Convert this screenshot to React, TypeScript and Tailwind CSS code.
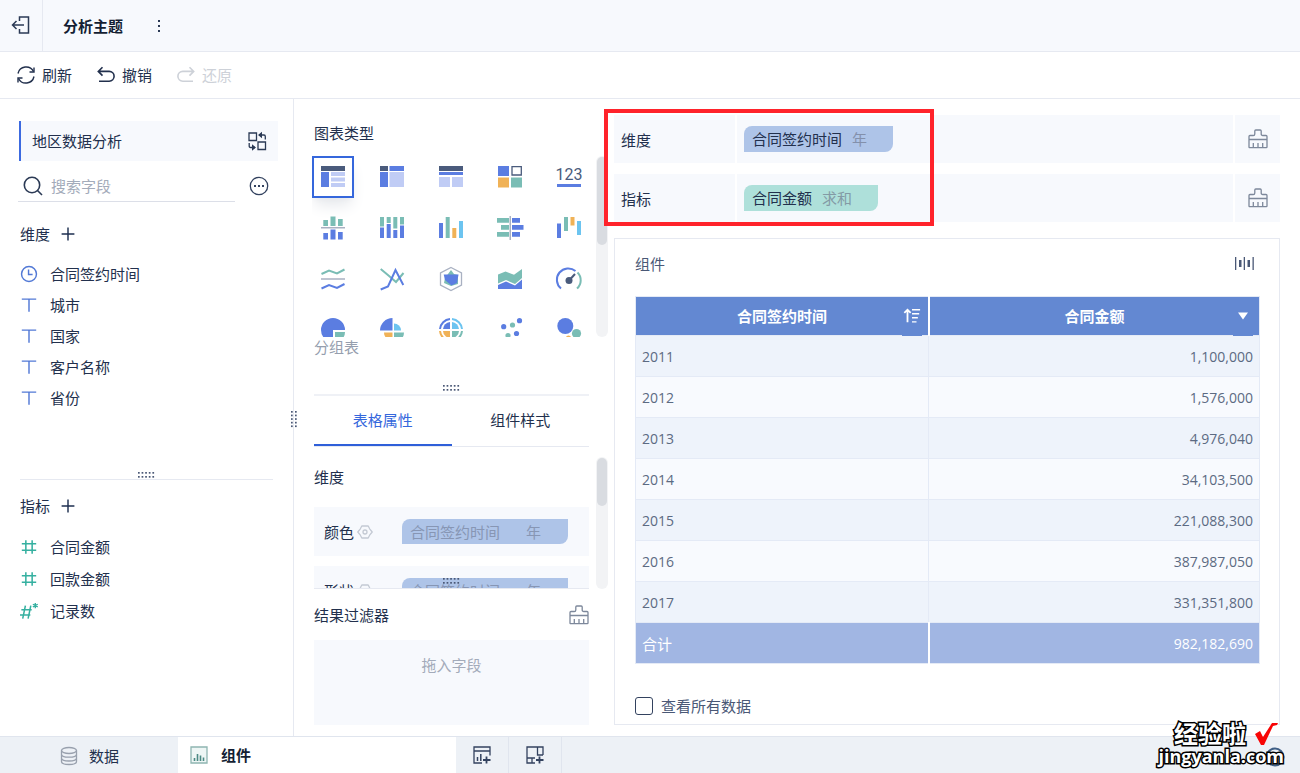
import { ReactNode, useState } from 'react'

const BLUE = '#5b7de1'
const LIGHT = '#c0ccf5'
const DARK = '#4a5b7c'
const GREEN = '#7abdb5'
const ORANGE = '#f0b257'
const CYAN = '#6cc4f0'
const GREY = '#a9b1c2'

interface IconProps {
  size?: number
  className?: string
  children: ReactNode
}

// Line icons all share a 20x20 grid
function Icon({ size = 20, className = '', children }: IconProps) {
  return (
    <svg
      width={size}
      height={size}
      viewBox="0 0 20 20"
      fill="none"
      stroke="currentColor"
      strokeWidth="1.3"
      className={`shrink-0 ${className}`}
      aria-hidden="true"
    >
      {children}
    </svg>
  )
}

function BrushIcon() {
  return (
    <Icon className="text-[#7d889b]">
      <path d="M1 18V7.500q0-1 1-1h3.200q1.600 0 1.600-1.600V2q0-1 1-1h4.400q1 0 1 1v2.900q0 1.600 1.600 1.600H18q1 0 1 1V18q0 .7-.7.7H1.700Q1 18.700 1 18z" />
      <path d="M1 10.500h18M5.300 14v4.700M10 14v4.700M14.700 14v4.700" />
    </Icon>
  )
}

function GearIcon() {
  return (
    <Icon size={16} className="text-[#c3c9d3]">
      <path d="M6 2.500h8l1.800 3.500L19 10l-3.200 4-1.800 3.500H6L4.200 14 1 10l3.200-4z" strokeLinejoin="round" strokeWidth="1.600" />
      <circle cx="10" cy="10" r="2.500" strokeWidth="1.600" />
    </Icon>
  )
}

function PlusIcon() {
  return (
    <Icon size={16} className="text-[#1e2f50]">
      <path d="M10 2v16M2 10h16" strokeWidth="1.800" />
    </Icon>
  )
}

function ClockIcon() {
  return (
    <Icon size={18} className="text-[#5279d6]">
      <circle cx="10" cy="10" r="8.300" strokeWidth="1.600" />
      <path d="M9.500 5v5.500h4.500" strokeWidth="1.600" />
    </Icon>
  )
}

function TextIcon() {
  return (
    <Icon size={18} className="text-[#5279d6]">
      <path d="M2 3.500h16M10 3.500v14" strokeWidth="1.600" />
    </Icon>
  )
}

function HashIcon() {
  return (
    <Icon size={18} className="text-[#35b0a0]">
      <path d="M6.500 2.500v15M13.500 2.500v15M2 6.500h16M2 13.500h16" strokeWidth="1.700" />
    </Icon>
  )
}

function HashStarIcon() {
  return (
    <Icon size={18} className="overflow-visible text-[#35b0a0]">
      <path d="M6 4l-3 14.500M12 4l-3 14.500M1.500 8.500h11.500M0 14.500h11.500" strokeWidth="1.700" />
      <path d="M17 1v6M14.300 2.500l5.400 3M19.700 2.500l-5.400 3" strokeWidth="1.500" />
    </Icon>
  )
}

const chartTypes: { name: string; art: ReactNode }[] = [
  {
    name: '分组表',
    art: (
      <>
        <path fill={DARK} d="M0 1h24v5H0z" />
        <path fill={BLUE} d="M0 7h8v15H0z" />
        <path fill={LIGHT} d="M10 7h14v4H10zM10 12.500h14v4H10zM10 18h14v4H10z" />
      </>
    ),
  },
  {
    name: '交叉表',
    art: (
      <>
        <path fill={DARK} d="M0 1h8v5H0z" />
        <path fill={BLUE} d="M9.500 1h14.500v5H9.500zM0 7h8v15H0z" />
        <path fill={LIGHT} d="M9.500 7h14.500v15H9.500z" />
      </>
    ),
  },
  {
    name: '明细表',
    art: (
      <>
        <path fill={DARK} d="M0 1h24v5H0z" />
        <path fill={BLUE} d="M0 7h24v3H0z" />
        <path fill={LIGHT} d="M0 12h11v10H0zM13 12h11v10H13z" />
      </>
    ),
  },
  {
    name: '颜色表格',
    art: (
      <>
        <path fill={BLUE} d="M0 1h11v10H0z" />
        <path fill="none" stroke={DARK} strokeWidth="1.300" d="M14 1.700h9.300v8.300H14z" />
        <path fill={ORANGE} d="M0 12.500h11v10H0z" />
        <path fill={GREEN} d="M13 12.500h11v10H13z" />
      </>
    ),
  },
  {
    name: '指标卡',
    art: (
      <>
        <text x="12" y="15" textAnchor="middle" fontSize="16" fontFamily="Roboto, sans-serif" fill={DARK}>
          123
        </text>
        <path fill={BLUE} d="M0 19h24v3H0z" />
      </>
    ),
  },
  {
    name: '对比柱状图',
    art: (
      <>
        <path fill={GREEN} d="M2.300 4h4.700v6H2.300zM9.500 0.500h5v9.500h-5zM17 3h4.700v7H17z" />
        <path fill={GREY} d="M0 11h24v1.500H0z" />
        <path fill={BLUE} d="M2.300 17h4.700v6.500H2.300zM9.500 13.500h5v10h-5zM17 16h4.700v7.500H17z" />
      </>
    ),
  },
  {
    name: '百分比柱状图',
    art: (
      <>
        <path fill={GREEN} d="M0 1h4v9.500H0zM6.700 1h4v6h-4zM13.300 1h4v11.500h-4zM20 1h4v7.500h-4z" />
        <path fill={BLUE} d="M0 11.500h4V22H0zM6.700 8h4v14h-4zM13.300 14h4v8h-4zM20 9.500h4V22h-4z" />
      </>
    ),
  },
  {
    name: '多系列柱状图',
    art: (
      <>
        <path fill={BLUE} d="M0 7h4v15H0z" />
        <path fill={GREEN} d="M6.700 1h4v21h-4z" />
        <path fill={ORANGE} d="M13.300 12h4v10h-4z" />
        <path fill={CYAN} d="M20 5h4v17h-4z" />
      </>
    ),
  },
  {
    name: '对比条形图',
    art: (
      <>
        <path fill={GREEN} d="M-1 2h12v4.700H-1zM3 9h8v4.700H3zM-1 16h12v4.700H-1z" />
        <path fill={GREY} d="M11.500 0H13v24h-1.500z" />
        <path fill={BLUE} d="M14 2h8v4.700h-8zM14 9h11.500v4.700H14zM14 16h8v4.700h-8z" />
      </>
    ),
  },
  {
    name: '瀑布图',
    art: (
      <>
        <path fill={BLUE} d="M0 7.500h4V22H0z" />
        <path fill={GREEN} d="M7 1h4v14H7z" />
        <path fill={ORANGE} d="M13.500 1h4v8.500h-4z" />
        <path fill={CYAN} d="M20 5h4v14h-4z" />
      </>
    ),
  },
  {
    name: '折线图',
    art: (
      <g fill="none" strokeWidth="2">
        <path stroke={GREEN} d="M.5 7 8 3.500l8 3L23.500 2.500" />
        <path stroke={GREY} d="M0 12h24" strokeWidth="1.500" />
        <path stroke={BLUE} d="M.5 21.500 8 18l8 3 7.500-4" />
      </g>
    ),
  },
  {
    name: '范围面积图',
    art: (
      <g fill="none" strokeWidth="2">
        <path stroke={GREEN} d="M.7 2 8.500 8.500 16 15l7.500-9" />
        <path stroke={BLUE} d="M.7 22.500 8 19.500 15.500 3l7.800 15" />
      </g>
    ),
  },
  {
    name: '雷达图',
    art: (
      <>
        <path fill="none" stroke={GREY} strokeWidth="1.300" d="M12 .5 22.500 6v12L12 23.500 1.500 18V6z" />
        <path fill={GREEN} d="M12 3l3 4 4 1v9l-7 2-7-3 1-5z" />
        <path fill={BLUE} d="M4.700 7.500h14.800L18 16l-5.500 2.500L6 13z" />
      </>
    ),
  },
  {
    name: '面积图',
    art: (
      <>
        <path fill={GREEN} d="M0 7.500l7.500-3L16 7.700 24 2v9l-7 6-9-4-8 3.500z" />
        <path fill={BLUE} d="M0 18l8-3.500 9 4 7-6V22H0z" />
      </>
    ),
  },
  {
    name: '仪表盘',
    art: (
      <>
        <path fill="none" stroke={BLUE} strokeWidth="2" d="M4 21.500A11 11 0 0 1 18.500 4" />
        <path fill="none" stroke={GREEN} strokeWidth="2" d="M20.500 5.500a11 11 0 0 1-.5 16" />
        <circle cx="12" cy="13.500" r="3.500" fill={DARK} />
        <path stroke={DARK} strokeWidth="2" d="M12 13.500 18 7" />
      </>
    ),
  },
  {
    name: '饼图',
    art: (
      <>
        <path fill={BLUE} d="M12 12h12A12 12 0 1 0 12 24z" />
        <path fill={GREEN} d="M14 14h10a10 10 0 0 1-10 10z" />
      </>
    ),
  },
  {
    name: '玫瑰图',
    art: (
      <>
        <path fill={BLUE} d="M12.500 12.500V0A12.500 12.500 0 0 0 0 12.500z" />
        <path fill={CYAN} d="M14 12.500h7A7 7 0 0 0 14 5.500z" />
        <path fill={ORANGE} d="M12.500 14.500v8a8 8 0 0 1-8.500-8z" />
        <path fill={GREEN} d="M14 14.500v10a10 10 0 0 0 10-10z" />
      </>
    ),
  },
  {
    name: '多层饼图',
    art: (
      <>
        <g fill="none" strokeWidth="2">
          <path stroke={BLUE} d="M11 1A11 11 0 0 0 1 11" />
          <path stroke={CYAN} d="M13 1a11 11 0 0 1 10 10" />
          <path stroke={GREEN} d="M23 13a11 11 0 0 1-10 10" />
          <path stroke={ORANGE} d="M1 13a11 11 0 0 0 10 10" />
        </g>
        <path fill={BLUE} d="M11 11V4a7.500 7.500 0 0 0-7 7z" />
        <path fill={CYAN} d="M13 11V4a7.500 7.500 0 0 1 7 7z" />
        <path fill={ORANGE} d="M11 13v7a7.500 7.500 0 0 1-7-7z" />
        <path fill={GREEN} d="M13 13v7a7.500 7.500 0 0 0 7-7z" />
      </>
    ),
  },
  {
    name: '散点图',
    art: (
      <>
        <g fill={BLUE}>
          <circle cx="5.700" cy="8.700" r="2.600" />
          <circle cx="21.500" cy="2.700" r="2.600" />
          <circle cx="18.500" cy="15.500" r="2.600" />
        </g>
        <g fill={GREEN}>
          <circle cx="14.500" cy="7" r="2.600" />
          <circle cx="10" cy="17.500" r="2.600" />
        </g>
      </>
    ),
  },
  {
    name: '聚合气泡图',
    art: (
      <>
        <circle cx="8.300" cy="8" r="8" fill={BLUE} />
        <circle cx="19.500" cy="15.500" r="4.600" fill={GREEN} />
        <circle cx="11.500" cy="20" r="2.600" fill={ORANGE} />
      </>
    ),
  },
]

const dimensions = [
  { name: '合同签约时间', icon: <ClockIcon /> },
  { name: '城市', icon: <TextIcon /> },
  { name: '国家', icon: <TextIcon /> },
  { name: '客户名称', icon: <TextIcon /> },
  { name: '省份', icon: <TextIcon /> },
]

const measures = [
  { name: '合同金额', icon: <HashIcon /> },
  { name: '回款金额', icon: <HashIcon /> },
  { name: '记录数', icon: <HashStarIcon /> },
]

const rows = [
  ['2011', '1,100,000'],
  ['2012', '1,576,000'],
  ['2013', '4,976,040'],
  ['2014', '34,103,500'],
  ['2015', '221,088,300'],
  ['2016', '387,987,050'],
  ['2017', '331,351,800'],
]

// Drag handle dots, 5x2 lying or 2x5 standing
function Grip({ vertical = false }: { vertical?: boolean }) {
  const dots = []
  for (let i = 0; i < 5; i++) {
    for (let j = 0; j < 2; j++) {
      const a = i * 3.6
      const b = j * 4
      dots.push(<rect key={`${i}-${j}`} x={vertical ? b : a} y={vertical ? a : b} width="1.700" height="1.700" />)
    }
  }
  return (
    <svg width={vertical ? 6 : 17} height={vertical ? 17 : 6} fill="#4a5876" className="block" aria-hidden="true">
      {dots}
    </svg>
  )
}

function TopBar() {
  return (
    <header className="flex h-[52px] items-center border-b border-[#e6e9f1] bg-[#f7f9fd]">
      <button aria-label="返回" className="flex h-full w-[43px] items-center justify-center border-r border-[#e6e9f1] pb-0.5 text-[#2b3a55]">
        <Icon>
          <path d="M8.500 6V2h9v16h-9v-4M13 10H1.500M5.500 6l-4 4 4 4" strokeWidth="1.500" />
        </Icon>
      </button>
      <h1 className="pl-5 font-bold leading-6 text-[#141e33]">分析主题</h1>
      <button aria-label="更多" className="ml-6 flex h-6 w-6 items-center justify-center">
        <svg width="4" height="14" fill="#2b3a55" aria-hidden="true">
          <rect x="1" y="1" width="2" height="2" />
          <rect x="1" y="6" width="2" height="2" />
          <rect x="1" y="11" width="2" height="2" />
        </svg>
      </button>
    </header>
  )
}

function Toolbar() {
  return (
    <div className="flex h-[47px] items-center gap-6 border-b border-[#e6e9f1] px-4 text-[#22304d]">
      <button className="flex items-center gap-1.5">
        <Icon>
          <path d="M2 8.500A8.300 8.300 0 0 1 17.500 6.500M18 11.500A8.300 8.300 0 0 1 2.500 13.500" strokeWidth="1.400" />
          <path d="M18 2.500v4.500h-4.500M2 17.500V13h4.500" strokeWidth="1.400" />
        </Icon>
        刷新
      </button>
      <button className="flex items-center gap-1.5">
        <Icon>
          <path d="M6.500 2.200 2.300 6.400l4.200 4.200M2.300 6.400h10.900a4.900 4.900 0 0 1 0 9.800H3" strokeWidth="1.600" />
        </Icon>
        撤销
      </button>
      <button disabled className="flex items-center gap-1.5 text-[#cdd1d8]">
        <Icon>
          <path d="M13.500 2.200l4.200 4.200-4.200 4.200M17.700 6.400H6.800a4.900 4.900 0 0 0 0 9.800H17" strokeWidth="1.600" />
        </Icon>
        还原
      </button>
    </div>
  )
}

function SectionTitle({ children }: { children: ReactNode }) {
  return (
    <div className="flex h-8 items-center gap-2.5 pl-5">
      <h2>{children}</h2>
      <button aria-label={`添加${children}`}>
        <PlusIcon />
      </button>
    </div>
  )
}

function FieldPanel() {
  return (
    <aside className="relative flex w-[294px] shrink-0 flex-col border-r border-[#e6e9f1]">
      <div className="ml-[19px] mr-[15px] mt-[22px] flex h-10 items-center justify-between border-l-2 border-[#3c6ae0] bg-[#f7f9fd] pl-[11px] pr-[11px]">
        <span>地区数据分析</span>
        <button aria-label="切换数据">
          <Icon className="text-[#2b3a55]">
            <path d="M2 2h7.500v7.500H2zM11 11h7.500v7.500H11z" />
            <path d="M12 4h5q1.300 0 1.300 1.500V8.500M8 16.500H3.500q-1.300 0-1.300-1.500V12" />
            <path fill="currentColor" stroke="none" d="M11 4l4-3.200v6.400zM9 16.500l-4-3.200v6.400z" />
          </Icon>
        </button>
      </div>
      <div className="ml-[18px] mr-6 flex h-[41px] items-stretch">
        <label className="flex flex-1 items-center gap-2 border-b border-[#dcdfe8] pl-[5px] pt-2.5">
          <Icon className="text-[#2b3a55]">
            <circle cx="9" cy="9" r="7.700" strokeWidth="1.600" />
            <path d="M14.500 14.500l4.500 4.500" strokeWidth="1.600" />
          </Icon>
          <input aria-label="搜索字段" placeholder="搜索字段" className="w-0 flex-1 bg-transparent outline-none placeholder:text-[#a3abba]" />
        </label>
        <button aria-label="更多选项" className="ml-3.5 pt-2">
          <Icon className="text-[#33425f]">
            <circle cx="10" cy="10" r="8.700" />
            <path d="M5 10h2M9 10h2M13 10h2" strokeWidth="2" />
          </Icon>
        </button>
      </div>

      <div className="flex min-h-[277px] flex-col pt-4">
        <SectionTitle>维度</SectionTitle>
        <ul className="pt-2">
          {dimensions.map((d) => (
            <li key={d.name} className="flex h-[31px] items-center gap-3 pl-5">
              {d.icon}
              {d.name}
            </li>
          ))}
        </ul>
        <div className="mt-auto flex h-[7px] justify-center">
          <Grip />
        </div>
      </div>
      <div className="ml-5 mr-5 border-t border-[#e6e9f1]" />
      <div className="pt-[10px]">
        <SectionTitle>指标</SectionTitle>
        <ul className="pt-[9px]">
          {measures.map((m) => (
            <li key={m.name} className="flex h-8 items-center gap-3 pl-5">
              {m.icon}
              {m.name}
            </li>
          ))}
        </ul>
      </div>
      <div className="absolute -right-1 top-[49%]">
        <Grip vertical />
      </div>
    </aside>
  )
}

function PropertyCard({ label }: { label: string }) {
  return (
    <div className="flex h-[49px] shrink-0 items-center bg-[#f7f9fd] pl-2.5 pr-[21px]">
      <span>{label}</span>
      <button aria-label={`${label}设置`} className="ml-[3px]">
        <GearIcon />
      </button>
      <div className="ml-auto flex h-[25px] w-[166px] items-center gap-[26px] rounded-br-lg rounded-tl-lg bg-[#aec4e8] pl-2 text-[#8796b4]">
        <span>合同签约时间</span>
        <span>年</span>
      </div>
    </div>
  )
}

function ChartPanel() {
  const [selected, setSelected] = useState('分组表')
  const [tab, setTab] = useState('表格属性')

  return (
    <section className="flex w-[320px] shrink-0 flex-col pl-5">
      <h2 className="pb-[11px] pt-[22px] leading-6">图表类型</h2>
      <div className="flex h-[181px]">
        <div className="-ml-0.5 grid w-[278px] grid-cols-5 content-start gap-x-[17px] gap-y-[9px] overflow-hidden">
          {chartTypes.map((c) => (
            <button
              key={c.name}
              aria-label={c.name}
              onClick={() => setSelected(c.name)}
              className={
                c.name === selected
                  ? 'flex h-[42px] w-[42px] items-center justify-center border-2 border-[#3567dc] shadow-lg shadow-gray-200'
                  : 'flex h-[42px] w-[42px] items-center justify-center'
              }
            >
              <svg width="24" height="24" viewBox="0 0 24 24" className="shrink-0 overflow-visible" aria-hidden="true">
                {c.art}
              </svg>
            </button>
          ))}
        </div>
        <div className="ml-1.5 w-3 rounded-full bg-[#f2f3f5] p-px">
          <div className="h-[88px] rounded-full bg-[#d9dce1]" />
        </div>
      </div>
      <p className="leading-5 text-[#959eae]">{selected}</p>

      <div className="mr-[25px] mt-7 flex h-[11px] justify-center border-b-2 border-[#eff1f6]">
        <Grip />
      </div>
      <div role="tablist" className="mr-[25px] flex h-[51px] border-b border-[#e6e9f1]">
        {['表格属性', '组件样式'].map((t) => (
          <button
            key={t}
            role="tab"
            aria-selected={t === tab}
            onClick={() => setTab(t)}
            className={t === tab ? 'flex-1 border-b-2 border-[#2f5fd9] text-[#3567dc]' : 'flex-1 border-b-2 border-transparent'}
          >
            {t}
          </button>
        ))}
      </div>

      <div className="relative mt-[10px] flex h-[132px]">
        <div className="flex w-[275px] flex-col gap-[10px] overflow-hidden border-b border-[#e6e9f1]">
          <h3 className="shrink-0 py-1.5 leading-7">维度</h3>
          <PropertyCard label="颜色" />
          <PropertyCard label="形状" />
        </div>
        <div className="ml-[7px] w-3 rounded-full bg-[#f2f3f5] p-px">
          <div className="h-12 rounded-full bg-[#d9dce1]" />
        </div>
        <div className="absolute bottom-[5px] left-[129px]">
          <Grip />
        </div>
      </div>

      <div className="mr-[25px] flex h-[51px] items-center justify-between">
        <h3>结果过滤器</h3>
        <button aria-label="清空过滤器">
          <BrushIcon />
        </button>
      </div>
      <div className="mb-[11px] mr-[25px] min-h-[85px] flex-1 bg-[#f7f9fd] pt-[13px] text-center leading-6 text-[#a3abba]">拖入字段</div>
    </section>
  )
}

function Shelf({ label, children }: { label: string; children: ReactNode }) {
  return (
    <div className="flex h-12 items-stretch gap-0.5">
      <div className="flex w-[121px] items-center bg-[#f7f9fd] pl-[7px] pt-0.5">{label}</div>
      <div className="flex flex-1 items-center bg-[#f7f9fd] pl-[7px]">{children}</div>
      <button aria-label={`清空${label}`} className="flex w-[45px] items-center justify-center bg-[#f7f9fd]">
        <BrushIcon />
      </button>
    </div>
  )
}

function DataTable() {
  return (
    <table className="w-full table-fixed border-collapse border border-[#e4eaf6]">
      <thead>
        <tr className="h-[39px] bg-[#6388d2] text-white">
          <th className="relative w-[47%] border-r-2 border-white p-0">
            <div className="flex items-center pl-[26px] pr-1.5">
              <span className="flex-1">合同签约时间</span>
              <button aria-label="排序" className="flex w-5 justify-center">
                <Icon size={18}>
                  <path d="M5 17V3M1.500 6.500 5 3l3.500 3.500" strokeWidth="2" />
                  <path d="M10 3h9M10 7.500h8M10 12h6.500M10 16.500h5" strokeWidth="1.600" />
                </Icon>
              </button>
            </div>
            <span className="absolute -bottom-px right-1.5 h-0.5 w-5 bg-[#6388d2]" />
          </th>
          <th className="relative p-0">
            <div className="flex items-center pl-[26px] pr-1.5">
              <span className="flex-1">合同金额</span>
              <button aria-label="筛选" className="flex w-5 justify-center">
                <svg width="10" height="8" fill="currentColor" aria-hidden="true">
                  <path d="M0 0.500h10L5 7.500z" />
                </svg>
              </button>
            </div>
            <span className="absolute -bottom-px right-1.5 h-0.5 w-5 bg-[#6388d2]" />
          </th>
        </tr>
      </thead>
      <tbody className="text-[14px] text-[#5c6a82]">
        {rows.map(([year, amount], i) => (
          <tr key={year} className={i % 2 === 0 ? 'h-[41px] bg-[#eef3fb]' : 'h-[41px] bg-[#f8fafe]'}>
            <td className="border border-[#e4eaf6] px-1.5 pb-0 pt-0.5">{year}</td>
            <td className="border border-[#e4eaf6] px-1.5 pb-0 pt-0.5 text-right">{amount}</td>
          </tr>
        ))}
      </tbody>
      <tfoot>
        <tr className="h-[41px] bg-[#a1b6e3] text-[14px] text-white">
          <td className="border-r-2 border-white px-1.5 pb-0 pt-0.5 text-[15px]">合计</td>
          <td className="px-1.5 pb-0 pt-0.5 text-right">982,182,690</td>
        </tr>
      </tfoot>
    </table>
  )
}

function Workspace() {
  return (
    <main className="flex min-w-0 flex-1 flex-col pb-[11px] pr-5 pt-4">
      <div className="relative flex flex-col gap-[11px]">
        <Shelf label="维度">
          <div className="flex h-[26px] w-[149px] items-center gap-2.5 rounded-br-lg rounded-tl-lg bg-[#aec4e8] pl-2">
            <span>合同签约时间</span>
            <span className="text-[#8390ab]">年</span>
          </div>
        </Shelf>
        <Shelf label="指标">
          <div className="flex h-[26px] w-[134px] items-center gap-2.5 rounded-br-lg rounded-tl-lg bg-[#aee0da] pl-2">
            <span>合同金额</span>
            <span className="text-[#839aa5]">求和</span>
          </div>
        </Shelf>
        <div className="pointer-events-none absolute -left-[10px] -top-1.5 h-[117px] w-[330px] border-4 border-[#ff232b]" />
      </div>

      <section className="mt-4 flex flex-1 flex-col border border-[#e6e9f1] pl-5 pr-[19px]">
        <div className="flex h-[57px] items-center justify-between pb-2 pr-1.5">
          <h2 className="text-[#4a5876]">组件</h2>
          <button aria-label="列宽">
            <svg width="19" height="14" fill="#4a5876" aria-hidden="true">
              <path d="M0 0h1.300v13H0zM4 3h2.500v7H4zM8.700 0H10v13H8.700zM12.500 3H15v7h-2.500zM17.500 0h1.300v13h-1.300z" />
            </svg>
          </button>
        </div>
        <DataTable />
        <label className="mt-auto flex h-9 items-center gap-2 text-[#4a5876]">
          <input type="checkbox" className="h-[18px] w-[18px] appearance-none rounded-[3px] border border-[#33425f] bg-white checked:bg-[#3567dc]" />
          查看所有数据
        </label>
      </section>
    </main>
  )
}

function BottomTabs() {
  return (
    <footer className="relative flex h-[37px] items-stretch border-t border-[#e0e5ee] bg-[#edf1f6]">
      <button className="flex w-[178px] items-center justify-center gap-2.5 pt-0.5">
        <Icon className="text-[#98a0ad]">
          <ellipse cx="10" cy="4.500" rx="7.500" ry="3" />
          <path d="M2.500 4.500v11c0 4 15 4 15 0v-11M2.500 8.200c0 4 15 4 15 0M2.500 12c0 4 15 4 15 0" />
        </Icon>
        数据
      </button>
      <button className="flex w-[278px] items-center gap-3 bg-white pl-[11px] font-bold text-[#141e33]">
        <Icon className="text-[#8fb5b1]">
          <path d="M2 2h16v16H2z" fill="#eef6f5" />
          <path d="M5.500 16v-3M8.500 16V9M11.500 16v-5.500M14.500 16v-3.500" stroke="#4c8a84" strokeWidth="1.600" />
        </Icon>
        组件
      </button>
      <button aria-label="新建组件" className="flex w-[53px] items-center justify-center border-r border-[#e0e5ee] text-[#33425f]">
        <Icon>
          <path d="M10 18H2V2h16v8.500M2 6h16" />
          <path d="M5.500 16v-4M8.800 16V9" strokeWidth="1.500" />
          <path d="M14.500 11.500v7M11 15h7.500" strokeWidth="1.800" />
        </Icon>
      </button>
      <button aria-label="新建仪表板" className="flex w-[53px] items-center justify-center border-r border-[#e0e5ee] text-[#33425f]">
        <Icon>
          <path d="M10 18H2V2h16v8M12.500 2v8H18M2 13h8M7 13v5" />
          <path d="M14.500 11.500v7M11 15h7.500" strokeWidth="1.800" />
        </Icon>
      </button>
      <button aria-label="帮助" className="ml-auto mr-[15px] pt-1 text-[#3f5f86]">
        <Icon>
          <circle cx="10" cy="10" r="8.500" strokeWidth="2" />
        </Icon>
      </button>
      <div className="pointer-events-none absolute bottom-2 right-4 flex flex-col items-end font-bold text-white [-webkit-text-stroke:3px_#000] [paint-order:stroke_fill]">
        <div className="flex items-center gap-2 pb-px">
          <span className="text-[24px] leading-6">经验啦</span>
          <svg width="24" height="24" viewBox="0 0 24 24" className="mr-1.5" aria-hidden="true">
            <path d="M1 12l5-3 3 6L18 1h6l-1 2-4 1-9 19H7z" fill="#f80505" />
          </svg>
        </div>
        <span className="text-[18px] leading-[18px]">jingyanla.com</span>
      </div>
    </footer>
  )
}

export default function App() {
  return (
    <div className="flex min-h-screen flex-col bg-white font-['Open_Sans','Noto_Sans_CJK_SC',sans-serif] text-[15px] leading-5 text-[#22304d]">
      <TopBar />
      <Toolbar />
      <div className="flex flex-1">
        <FieldPanel />
        <ChartPanel />
        <Workspace />
      </div>
      <BottomTabs />
    </div>
  )
}
